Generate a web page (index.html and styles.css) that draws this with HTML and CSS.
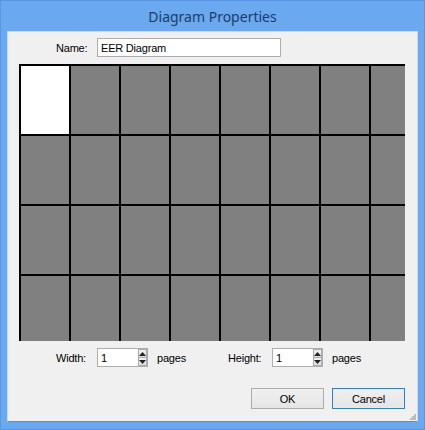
FILE: index.html
```html
<!DOCTYPE html>
<html lang="en">
<head>
  <meta charset="UTF-8" />
  <meta name="viewport" content="width=device-width, initial-scale=1.0" />
  <title>Diagram Properties</title>
  <link rel="stylesheet" href="styles.css">
</head>
<body>
  <div class="window">
    <div class="titlebar">Diagram Properties</div>
    <div class="client">
      <div class="name-row">
        <label class="label name-label" for="diagramName">Name:</label>
        <input class="textbox name-box" id="diagramName" type="text" value="EER Diagram" />
      </div>

      <!-- page layout preview: first page is the one in use -->
      <div class="pages-view">
        <div class="pages-grid" id="pagesGrid"></div>
      </div>

      <div class="size-row">
        <label class="label width-label">Width:</label>
        <div class="spin">
          <input class="spin-input" type="text" value="1" />
          <div class="spin-buttons">
            <span class="spin-up"><svg width="7" height="4" viewBox="0 0 7 4"><path d="M0 4 L3.5 0 L7 4 Z" fill="#222"/></svg></span>
            <span class="spin-down"><svg width="7" height="4" viewBox="0 0 7 4"><path d="M0 0 L3.5 4 L7 0 Z" fill="#222"/></svg></span>
          </div>
        </div>
        <span class="unit">pages</span>

        <label class="label height-label">Height:</label>
        <div class="spin">
          <input class="spin-input" type="text" value="1" />
          <div class="spin-buttons">
            <span class="spin-up"><svg width="7" height="4" viewBox="0 0 7 4"><path d="M0 4 L3.5 0 L7 4 Z" fill="#222"/></svg></span>
            <span class="spin-down"><svg width="7" height="4" viewBox="0 0 7 4"><path d="M0 0 L3.5 4 L7 0 Z" fill="#222"/></svg></span>
          </div>
        </div>
        <span class="unit">pages</span>
      </div>

      <div class="button-row">
        <button class="btn">OK</button>
        <button class="btn default">Cancel</button>
      </div>

      <svg class="grip" width="7" height="7" viewBox="0 0 7 7">
        <rect x="5" y="1" width="2" height="2" fill="#bcbcbc"/>
        <rect x="3" y="3" width="2" height="2" fill="#bcbcbc"/>
        <rect x="5" y="3" width="2" height="2" fill="#bcbcbc"/>
        <rect x="1" y="5" width="2" height="2" fill="#bcbcbc"/>
        <rect x="3" y="5" width="2" height="2" fill="#bcbcbc"/>
        <rect x="5" y="5" width="2" height="2" fill="#bcbcbc"/>
      </svg>
    </div>
  </div>

  <script>
    // 8 x 4 pages, only the first one is selected
    const grid = document.getElementById("pagesGrid");
    for (let i = 0; i < 32; i++) {
      const cell = document.createElement("div");
      cell.className = i === 0 ? "page selected" : "page";
      grid.appendChild(cell);
    }
  </script>
</body>
</html>
```

FILE: styles.css
```css
body {
  margin: 0;
  padding: 0;
  font-family: "Liberation Sans", Arial, sans-serif;
  background: #6aa8f0;
}
.window {
  width: 425px;
  height: 430px;
  box-sizing: border-box;
  background: #6aa8f0;
  border: 1px solid #5a97e2;
  padding: 0 6px 7px 6px;
  display: flex;
  flex-direction: column;
}
.titlebar {
  height: 29px;
  display: flex;
  align-items: center;
  justify-content: center;
  font-family: "Noto Sans", "Open Sans", sans-serif;
  font-size: 14px;
  color: #1c3d66;
  padding-top: 1px;
}
.client {
  flex: 1;
  position: relative;
  background: #f0f0f0;
  border: 1px solid #c9d9ee;
  border-bottom-color: #5b8fce;
  font-size: 11px;
  letter-spacing: -0.2px;
  color: #000;
}
.name-row {
  display: flex;
  align-items: center;
  margin: 6px 0 0 48px;
  height: 19px;
}
.label {
  display: inline-block;
}
.name-label {
  width: 41px;
}
.textbox {
  font-family: inherit;
  font-size: inherit;
  letter-spacing: inherit;
  box-sizing: border-box;
  border: 1px solid #abadb3;
  background: #fff;
  padding: 0 3px;
  outline: none;
}
.name-box {
  width: 184px;
  height: 19px;
}
.pages-view {
  width: 386px;
  height: 277px;
  margin: 7px 0 0 11px;
  overflow: hidden;
  background: #808080;
}
.pages-grid {
  display: grid;
  grid-template-columns: repeat(8, 50px);
  grid-template-rows: repeat(4, 70px);
}
.page {
  box-sizing: border-box;
  background: #808080;
  border-left: 2px solid #000;
  border-top: 2px solid #000;
}
.page.selected {
  background: #fff;
}
.size-row {
  display: flex;
  align-items: center;
  height: 19px;
  margin: 7px 0 0 48px;
}
.width-label {
  width: 41px;
}
.height-label {
  width: 44px;
  margin-left: 42px;
}
.spin {
  display: flex;
  width: 51px;
  height: 19px;
  box-sizing: border-box;
  border: 1px solid #abadb3;
  background: #fff;
}
.spin-input {
  width: 34px;
  border: none;
  outline: none;
  padding: 0 3px;
  font-family: inherit;
  font-size: inherit;
  letter-spacing: inherit;
  background: #fff;
}
.spin-buttons {
  width: 15px;
  display: flex;
  flex-direction: column;
  margin-left: auto;
}
.spin-up,
.spin-down {
  flex: 1;
  display: flex;
  align-items: center;
  justify-content: center;
  background: linear-gradient(#f2f2f2, #e0e0e0);
  border: 1px solid #acacac;
}
.spin-up {
  border-bottom: none;
}
.unit {
  margin-left: 9px;
}
.button-row {
  display: flex;
  justify-content: flex-end;
  gap: 8px;
  margin: 21px 12px 0 0;
}
.btn {
  width: 73px;
  height: 21px;
  padding: 0;
  font-family: inherit;
  font-size: 11px;
  letter-spacing: -0.2px;
  color: #000;
  background: linear-gradient(#f0f0f0, #e5e5e5);
  border: 1px solid #acacac;
  cursor: pointer;
}
.btn.default {
  border-color: #3c7fb1;
  box-shadow: inset 0 0 0 1px #dcecfc;
}
.grip {
  position: absolute;
  right: 1px;
  bottom: 1px;
}
```
